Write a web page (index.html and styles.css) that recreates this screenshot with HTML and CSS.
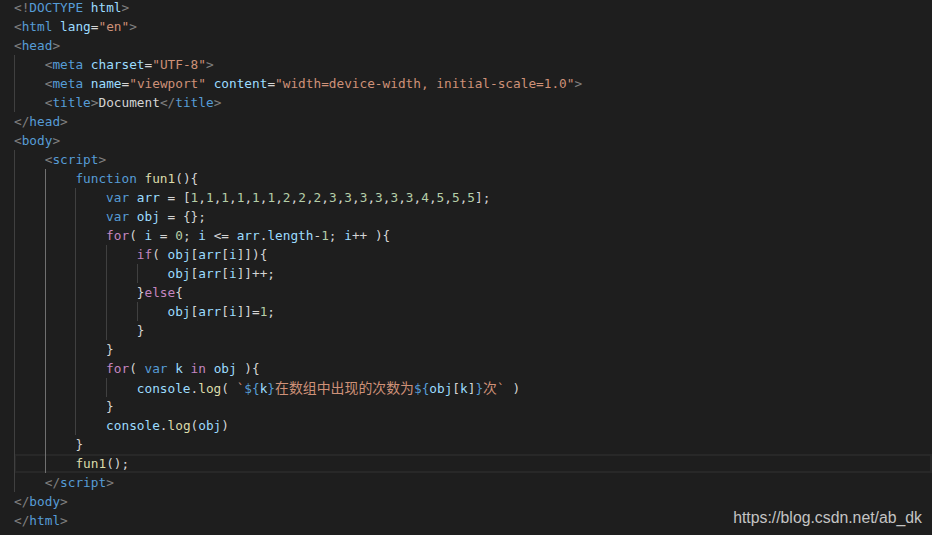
FILE: index.html
```html
<!DOCTYPE html>
<html lang="en">
<head>
<meta charset="UTF-8">
<title>Editor</title>
<link rel="stylesheet" href="styles.css">
</head>
<body>
<div class="editor">
<div class="ln"><span class="code"><span class="p">&lt;!</span><span class="t">DOCTYPE</span> <span class="a">html</span><span class="p">&gt;</span></span></div>
<div class="ln"><span class="code"><span class="p">&lt;</span><span class="t">html</span> <span class="a">lang</span>=<span class="s">"en"</span><span class="p">&gt;</span></span></div>
<div class="ln"><span class="code"><span class="p">&lt;</span><span class="t">head</span><span class="p">&gt;</span></span></div>
<div class="ln"><span class="g"></span><span class="code"><span class="p">&lt;</span><span class="t">meta</span> <span class="a">charset</span>=<span class="s">"UTF-8"</span><span class="p">&gt;</span></span></div>
<div class="ln"><span class="g"></span><span class="code"><span class="p">&lt;</span><span class="t">meta</span> <span class="a">name</span>=<span class="s">"viewport"</span> <span class="a">content</span>=<span class="s">"width=device-width, initial-scale=1.0"</span><span class="p">&gt;</span></span></div>
<div class="ln"><span class="g"></span><span class="code"><span class="p">&lt;</span><span class="t">title</span><span class="p">&gt;</span>Document<span class="p">&lt;/</span><span class="t">title</span><span class="p">&gt;</span></span></div>
<div class="ln"><span class="code"><span class="p">&lt;/</span><span class="t">head</span><span class="p">&gt;</span></span></div>
<div class="ln"><span class="code"><span class="p">&lt;</span><span class="t">body</span><span class="p">&gt;</span></span></div>
<div class="ln"><span class="g"></span><span class="code"><span class="p">&lt;</span><span class="t">script</span><span class="p">&gt;</span></span></div>
<div class="ln"><span class="g"></span><span class="g on"></span><span class="code"><span class="k">function</span> <span class="f">fun1</span>(){</span></div>
<div class="ln"><span class="g"></span><span class="g on"></span><span class="g"></span><span class="code"><span class="k">var</span> <span class="v">arr</span> = [<span class="n">1</span>,<span class="n">1</span>,<span class="n">1</span>,<span class="n">1</span>,<span class="n">1</span>,<span class="n">1</span>,<span class="n">2</span>,<span class="n">2</span>,<span class="n">2</span>,<span class="n">3</span>,<span class="n">3</span>,<span class="n">3</span>,<span class="n">3</span>,<span class="n">3</span>,<span class="n">3</span>,<span class="n">4</span>,<span class="n">5</span>,<span class="n">5</span>,<span class="n">5</span>];</span></div>
<div class="ln"><span class="g"></span><span class="g on"></span><span class="g"></span><span class="code"><span class="k">var</span> <span class="v">obj</span> = {};</span></div>
<div class="ln"><span class="g"></span><span class="g on"></span><span class="g"></span><span class="code"><span class="c">for</span>( <span class="v">i</span> = <span class="n">0</span>; <span class="v">i</span> &lt;= <span class="v">arr</span>.<span class="v">length</span>-<span class="n">1</span>; <span class="v">i</span>++ ){</span></div>
<div class="ln"><span class="g"></span><span class="g on"></span><span class="g"></span><span class="g"></span><span class="code"><span class="c">if</span>( <span class="v">obj</span>[<span class="v">arr</span>[<span class="v">i</span>]]){</span></div>
<div class="ln"><span class="g"></span><span class="g on"></span><span class="g"></span><span class="g"></span><span class="g"></span><span class="code"><span class="v">obj</span>[<span class="v">arr</span>[<span class="v">i</span>]]++;</span></div>
<div class="ln"><span class="g"></span><span class="g on"></span><span class="g"></span><span class="g"></span><span class="code">}<span class="c">else</span>{</span></div>
<div class="ln"><span class="g"></span><span class="g on"></span><span class="g"></span><span class="g"></span><span class="g"></span><span class="code"><span class="v">obj</span>[<span class="v">arr</span>[<span class="v">i</span>]]=<span class="n">1</span>;</span></div>
<div class="ln"><span class="g"></span><span class="g on"></span><span class="g"></span><span class="g"></span><span class="code">}</span></div>
<div class="ln"><span class="g"></span><span class="g on"></span><span class="g"></span><span class="code">}</span></div>
<div class="ln"><span class="g"></span><span class="g on"></span><span class="g"></span><span class="code"><span class="c">for</span>( <span class="k">var</span> <span class="v">k</span> <span class="c">in</span> <span class="v">obj</span> ){</span></div>
<div class="ln"><span class="g"></span><span class="g on"></span><span class="g"></span><span class="g"></span><span class="code"><span class="v">console</span>.<span class="f">log</span>( <span class="s">`</span><span class="k">${</span><span class="v">k</span><span class="k">}</span><span class="s cjk">在数组中出现的次数为</span><span class="k">${</span><span class="v">obj</span>[<span class="v">k</span>]<span class="k">}</span><span class="s"><span class="cjk">次</span>`</span> )</span></div>
<div class="ln"><span class="g"></span><span class="g on"></span><span class="g"></span><span class="code">}</span></div>
<div class="ln"><span class="g"></span><span class="g on"></span><span class="g"></span><span class="code"><span class="v">console</span>.<span class="f">log</span>(<span class="v">obj</span>)</span></div>
<div class="ln"><span class="g"></span><span class="g on"></span><span class="code">}</span></div>
<div class="ln cur"><span class="g"></span><span class="g on"></span><span class="code"><span class="f">fun1</span>();</span></div>
<div class="ln"><span class="g"></span><span class="code"><span class="p">&lt;/</span><span class="t">script</span><span class="p">&gt;</span></span></div>
<div class="ln"><span class="code"><span class="p">&lt;/</span><span class="t">body</span><span class="p">&gt;</span></span></div>
<div class="ln"><span class="code"><span class="p">&lt;/</span><span class="t">html</span><span class="p">&gt;</span></span></div>
</div>
<div class="mark">https://blog.csdn.net/ab_dk</div>
</body>
</html>
```

FILE: styles.css
```css
html, body {
  margin: 0;
  padding: 0;
  background: #1e1e1e;
  height: 100%;
  overflow: hidden;
}
body {
  position: relative;
  width: 932px;
  height: 535px;
}
.editor {
  margin-top: -2px;
  font-family: "DejaVu Sans Mono", "Liberation Mono", monospace;
  font-size: 12.75px;
  color: #d4d4d4;
}
.ln {
  display: flex;
  height: 19px;
  line-height: 19px;
  margin-left: 14px;
}
.ln.cur {
  box-shadow: inset 0 0 0 2px #282828;
}
.g {
  flex: none;
  width: 4ch;
  height: 19px;
  box-shadow: inset 1px 0 0 #404040;
}
.g.on {
  box-shadow: inset 1px 0 0 #707070;
}
.code {
  white-space: pre;
  height: 19px;
}
.p { color: #808080; }
.t { color: #569cd6; }
.a { color: #9cdcfe; }
.s { color: #ce9178; }
.k { color: #569cd6; }
.c { color: #c586c0; }
.f { color: #dcdcaa; }
.v { color: #9cdcfe; }
.n { color: #b5cea8; }
.cjk {
  font-family: "Noto Sans CJK SC", sans-serif;
  font-size: 13.9px;
  line-height: 19px;
}
.mark {
  position: absolute;
  right: 10px;
  bottom: 8px;
  font-family: "Liberation Sans", Arial, sans-serif;
  font-size: 15.8px;
  color: #c4c4c4;
}
```
